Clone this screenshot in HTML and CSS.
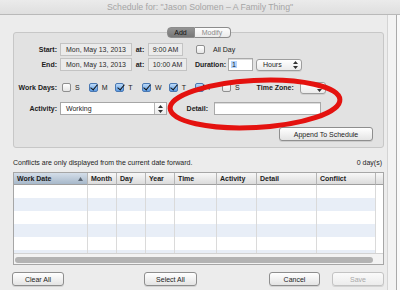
FILE: index.html
```html
<!DOCTYPE html>
<html lang="en">
<head>
  <meta charset="UTF-8" />
  <title>Schedule</title>
  <link rel="stylesheet" href="styles.css">
</head>
<body>
  <div class="titlebar">Schedule for: "Jason Solomen – A Family Thing"</div>
  <div class="main">
    <div class="window">
      <div class="tabs"><span class="tab on">Add</span><span class="tab off">Modify</span></div>

      <div class="group">
        <div class="row">
          <span class="lbl">Start:</span>
          <div class="box date">Mon, May 13, 2013</div>
          <span class="at">at:</span>
          <div class="box t1">9:00 AM</div>
          <span class="cb allday"></span><span class="txt">All Day</span>
        </div>

        <div class="row r-end">
          <span class="lbl">End:</span>
          <div class="box date">Mon, May 13, 2013</div>
          <span class="at">at:</span>
          <div class="box t2">10:00 AM</div>
          <span class="lbl dur-lbl">Duration:</span>
          <div class="input dur"><span class="sel">1</span></div>
          <div class="pop hours">Hours
            <svg width="5" height="8" viewBox="0 0 5 8"><path d="M2.5 0L5 3H0zM2.5 8L0 5h5z" fill="#333"/></svg>
          </div>
        </div>

        <div class="row r-days">
          <span class="lbl">Work Days:</span>
          <div class="days">
            <div class="day"><span class="cb"></span>S</div>
            <div class="day"><span class="cb on"></span>M</div>
            <div class="day"><span class="cb on"></span>T</div>
            <div class="day"><span class="cb on"></span>W</div>
            <div class="day"><span class="cb on"></span>T</div>
            <div class="day"><span class="cb on"></span>F</div>
            <div class="day"><span class="cb"></span>S</div>
          </div>
          <span class="tz-lbl">Time Zone:</span>
          <div class="pop tz">
            <svg width="5" height="8" viewBox="0 0 5 8"><path d="M2.5 0L5 3H0zM2.5 8L0 5h5z" fill="#333"/></svg>
          </div>
        </div>

        <div class="row r-act">
          <span class="lbl">Activity:</span>
          <div class="combo">
            <span>Working</span>
            <div class="stepper">
              <svg width="5" height="8" viewBox="0 0 5 8"><path d="M2.5 0L5 3H0zM2.5 8L0 5h5z" fill="#333"/></svg>
            </div>
          </div>
          <span class="lbl detail-lbl">Detail:</span>
          <div class="input detail"></div>
        </div>

        <div class="row r-append">
          <button class="btn append">Append To Schedule</button>
        </div>
      </div>

      <div class="note">
        <span>Conflicts are only displayed from the current date forward.</span>
        <span>0 day(s)</span>
      </div>

      <div class="table">
        <div class="thead">
          <div class="th sort">Work Date
            <svg width="5" height="4" viewBox="0 0 5 4"><path d="M2.5 0L5 4H0z" fill="#5b6674"/></svg>
          </div>
          <div class="th">Month</div>
          <div class="th">Day</div>
          <div class="th">Year</div>
          <div class="th">Time</div>
          <div class="th">Activity</div>
          <div class="th">Detail</div>
          <div class="th">Conflict</div>
          <div class="th last"></div>
        </div>
        <div class="tbody">
          <div class="col"></div><div class="col"></div><div class="col"></div>
          <div class="col"></div><div class="col"></div><div class="col"></div>
          <div class="col"></div><div class="col"></div><div class="col last"></div>
        </div>
        <div class="hscroll"><div class="thumb"></div></div>
      </div>

      <div class="actions">
        <button class="btn clear">Clear All</button>
        <button class="btn select">Select All</button>
        <button class="btn cancel">Cancel</button>
        <button class="btn save" disabled>Save</button>
      </div>
    </div>
    <div class="edge"></div>
  </div>

  <svg class="mark" width="400" height="290" viewBox="0 0 400 290">
    <ellipse cx="255" cy="104" rx="85" ry="23.5" transform="rotate(-3 255 104)" fill="none" stroke="#e4120f" stroke-width="5"/>
  </svg>
</body>
</html>
```

FILE: styles.css
```css
* {
  box-sizing: border-box;
}

body {
  margin: 0;
  width: 400px;
  height: 290px;
  overflow: hidden;
  position: relative;
  font-family: "Liberation Sans", Arial, sans-serif;
  font-size: 7px;
  color: #1c1c1c;
  background: #f6f6f6;
}

.titlebar {
  height: 15px;
  padding-top: 1px;
  border-bottom: 1px solid #b9b9b9;
  background: linear-gradient(#ebebeb, #dfdfdf);
  text-align: center;
  font-size: 8.7px;
  line-height: 13px;
  color: #a5a5a5;
}

.main {
  display: flex;
  height: 275px;
}

.window {
  width: 388px;
  background: #ececec;
  padding: 0 3px 0 13px;
  border-right: 1px solid #d4d4d4;
}

.edge {
  flex: 1;
  background: linear-gradient(to right, #f3f3f3 8px, #aaa 8px, #aaa 9px, #fafafa 9px);
}

/* segmented tabs */
.tabs {
  display: flex;
  justify-content: center;
  margin-top: 12px;
  position: relative;
  z-index: 1;
}

.tab {
  height: 11px;
  line-height: 9px;
  border: 1px solid #8c8c8c;
  text-align: center;
}

.tab.on {
  width: 28px;
  background: linear-gradient(#939393, #777);
  border-radius: 4px 0 0 4px;
  color: #111;
}

.tab.off {
  width: 36px;
  border-left: none;
  background: linear-gradient(#fdfdfd, #ebebeb);
  border-radius: 0 4px 4px 0;
  color: #8a8a8a;
}

/* group box */
.group {
  margin-top: -6px;
  height: 116px;
  background: #e2e2e2;
  border: 1px solid #c7c7c7;
  border-radius: 3px;
  padding-top: 10px;
}

.row {
  display: flex;
  align-items: center;
  height: 13px;
}

.r-end { margin-top: 2px; }
.r-days { margin-top: 10px; }
.r-act { margin-top: 8px; }

.r-append {
  margin-top: 12px;
  height: 14px;
  justify-content: flex-end;
  padding-right: 10px;
}

.lbl {
  flex: none;
  width: 43px;
  margin-right: 3px;
  text-align: right;
  font-weight: bold;
}

.box {
  flex: none;
  height: 13px;
  line-height: 11px;
  border: 1px solid #c3c3c3;
  background: #ebebeb;
  text-align: center;
  color: #2a2a2a;
}

.date { width: 72px; }
.t1 { width: 35px; }
.t2 { width: 39px; }

.at {
  width: 16px;
  text-align: center;
  font-weight: bold;
}

.cb {
  flex: none;
  width: 9px;
  height: 9px;
  border: 1px solid #8f8f8f;
  border-radius: 2px;
  background: linear-gradient(#fff, #e6e6e6);
  position: relative;
}

.cb.on {
  background: linear-gradient(#bcdaf8, #5b9be4);
  border-color: #4a78b2;
}

.cb.on::after {
  content: "";
  position: absolute;
  left: 2.5px;
  top: -1.5px;
  width: 3px;
  height: 6px;
  border: solid #121212;
  border-width: 0 1.5px 1.5px 0;
  transform: rotate(40deg);
}

.allday {
  margin-left: 13px;
  margin-right: 8px;
}

.dur-lbl {
  width: 39px;
  margin-right: 2px;
}

.input {
  flex: none;
  height: 13px;
  background: #fff;
  border: 1px solid #a9a9a9;
  box-shadow: inset 0 1px 0 #dcdcdc;
}

.dur {
  width: 25px;
  padding: 1px 0 0 2px;
  line-height: 9px;
}

.sel {
  background: #b3d4fc;
  padding: 0 1px;
}

.pop {
  flex: none;
  height: 12px;
  display: flex;
  align-items: center;
  justify-content: space-between;
  padding: 0 3px 0 6px;
  border: 1px solid #9d9d9d;
  border-radius: 3px;
  background: linear-gradient(#fff, #ebebeb);
  box-shadow: 0 1px 0 rgba(0, 0, 0, 0.08);
}

.hours {
  width: 46px;
  margin-left: 3px;
}

.days {
  display: grid;
  grid-template-columns: repeat(7, 26.67px);
  margin-left: 2px;
}

.day {
  display: flex;
  align-items: center;
  gap: 4px;
}

.tz-lbl {
  font-weight: bold;
  margin-left: 8px;
  width: 43px;
}

.tz {
  width: 26px;
  justify-content: flex-end;
}

.combo {
  flex: none;
  display: flex;
  width: 107px;
  height: 13px;
  border: 1px solid #a6a6a6;
  background: #fff;
}

.combo span {
  flex: 1;
  padding-left: 5px;
  line-height: 11px;
}

.stepper {
  width: 12px;
  display: flex;
  align-items: center;
  justify-content: center;
  border-left: 1px solid #b5b5b5;
  background: linear-gradient(#fff, #ebebeb);
}

.detail-lbl {
  width: 41px;
  margin-right: 6px;
}

.detail { width: 107px; }

.btn {
  height: 14px;
  padding: 0;
  font-family: inherit;
  font-size: 7px;
  color: #1c1c1c;
  border: 1px solid #8e8e8e;
  border-radius: 3px;
  background: linear-gradient(#fff, #e4e4e4);
  box-shadow: 0 1px 0 rgba(0, 0, 0, 0.1);
}

.append { width: 94px; }

/* table */
.note {
  display: flex;
  justify-content: space-between;
  margin-top: 10px;
  line-height: 9px;
  padding-right: 2px;
}

.table {
  margin-top: 5px;
  border: 1px solid #a6a6a6;
  background: #fff;
}

.thead, .tbody {
  display: grid;
  grid-template-columns: 74px 29px 29px 29px 42px 40px 60px 59px 7px;
}

.th {
  height: 12px;
  line-height: 11px;
  padding-left: 3px;
  font-weight: bold;
  border-right: 1px solid #b5b5b5;
  border-bottom: 1px solid #9f9f9f;
  background: linear-gradient(#f7f7f7, #dcdcdc);
}

.th.sort {
  display: flex;
  justify-content: space-between;
  align-items: center;
  padding-right: 4px;
  background: linear-gradient(#d4dee9, #a7b8ca);
}

.th.last { border-right: none; }

.tbody {
  height: 68px;
  background: repeating-linear-gradient(#fff 0 13px, #e8eef7 13px 26px);
}

.col { border-right: 1px solid #dadada; }

.col.last {
  border-right: none;
  background: #fff;
}

.hscroll {
  height: 11px;
  padding: 3px 10px 0 1px;
  border-top: 1px solid #d3d3d3;
  background: #f3f3f3;
}

.thumb {
  height: 6px;
  border-radius: 3px;
  background: #b3b3b3;
}

.actions {
  display: flex;
  margin-top: 7px;
  margin-left: -1px;
}

.clear { width: 52px; }
.select { width: 53px; margin-left: 80px; }
.cancel { width: 51px; margin-left: 72px; }

.save {
  width: 52px;
  margin-left: 12px;
  color: #a9a9a9;
  border-color: #c3c3c3;
  background: linear-gradient(#fafafa, #ececec);
}

.mark {
  position: absolute;
  top: 0;
  left: 0;
  pointer-events: none;
}
```
